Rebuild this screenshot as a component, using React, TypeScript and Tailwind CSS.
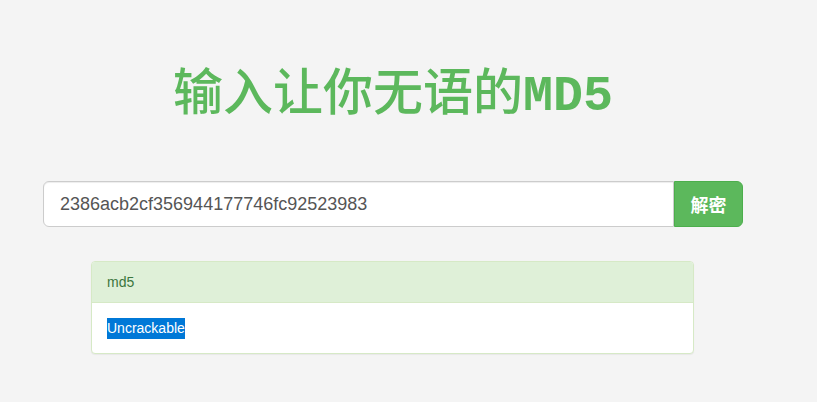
export default function App() {
  return (
    <div className="min-h-[402px] w-full bg-[#f4f4f4] font-['Liberation_Sans',Arial,sans-serif]">
      <div className="ml-[28px] w-[730px] px-[15px] pt-[69px]">
        <h1 className="text-center text-[50px] leading-[55px] font-medium text-[#5cb85c] font-['Liberation_Mono','Noto_Sans_CJK_SC',monospace]">
          输入让你无语的<span className="font-bold">MD5</span>
        </h1>

        <div className="mt-[57px] flex h-[46px]">
          <input
            readOnly
            value="2386acb2cf356944177746fc92523983"
            className="h-full flex-1 rounded-l-[6px] border border-[#ccc] bg-white px-[16px] text-[18px] text-[#555] shadow-[inset_0_1px_1px_rgba(0,0,0,0.075)] outline-none"
          />
          <button className="h-full w-[69px] rounded-r-[6px] border border-[#4cae4c] bg-[#5cb85c] text-[18px] font-bold text-white font-['Noto_Sans_CJK_SC',sans-serif]">
            解密
          </button>
        </div>

        <div className="ml-[48px] mt-[34px] w-[603px] overflow-hidden rounded-[4px] border border-[#d6e9c6] bg-white shadow-[0_1px_1px_rgba(0,0,0,0.05)]">
          <div className="flex h-[41px] items-center border-b border-[#d6e9c6] bg-[#dff0d8] px-[15px] text-[14px] text-[#3c763d]">
            md5
          </div>
          <div className="flex h-[50px] items-center px-[15px] text-[14px] text-[#333]">
            <span className="bg-[#0078d7] text-white">Uncrackable</span>
          </div>
        </div>
      </div>
    </div>
  );
}
